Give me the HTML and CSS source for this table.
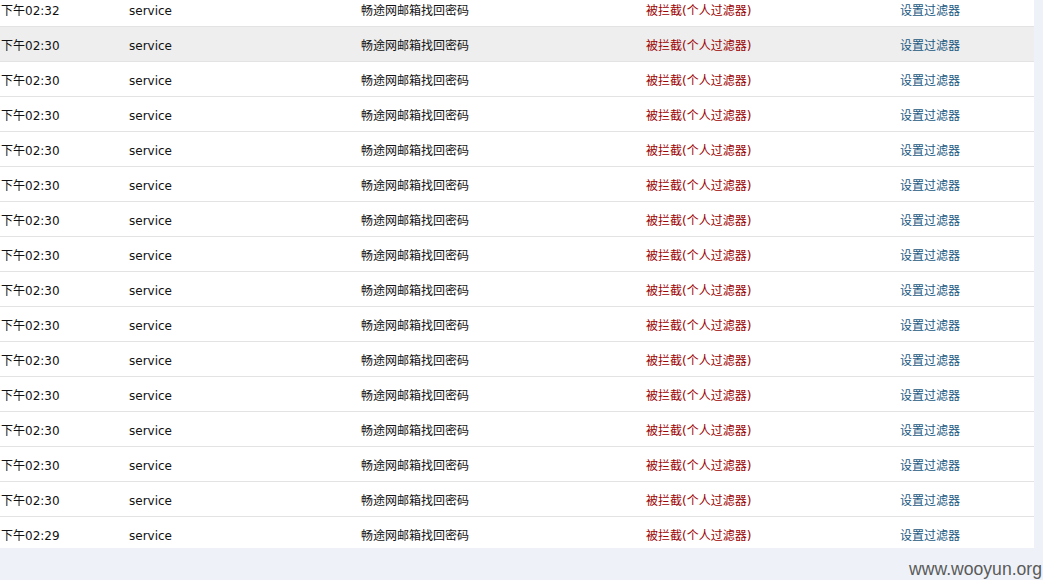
FILE: index.html
```html
<!DOCTYPE html>
<html lang="zh-CN">
<head>
<meta charset="utf-8">
<title>邮件列表</title>
<link rel="stylesheet" href="styles.css">
</head>
<body>
<div class="page">
  <div class="list">
    <div class="row"><span class="c time">下午02:32</span><span class="c from">service</span><span class="c subj">畅途网邮箱找回密码</span><span class="c status">被拦截(个人过滤器)</span><a class="c act" href="#">设置过滤器</a></div>
    <div class="row alt"><span class="c time">下午02:30</span><span class="c from">service</span><span class="c subj">畅途网邮箱找回密码</span><span class="c status">被拦截(个人过滤器)</span><a class="c act" href="#">设置过滤器</a></div>
    <div class="row"><span class="c time">下午02:30</span><span class="c from">service</span><span class="c subj">畅途网邮箱找回密码</span><span class="c status">被拦截(个人过滤器)</span><a class="c act" href="#">设置过滤器</a></div>
    <div class="row"><span class="c time">下午02:30</span><span class="c from">service</span><span class="c subj">畅途网邮箱找回密码</span><span class="c status">被拦截(个人过滤器)</span><a class="c act" href="#">设置过滤器</a></div>
    <div class="row"><span class="c time">下午02:30</span><span class="c from">service</span><span class="c subj">畅途网邮箱找回密码</span><span class="c status">被拦截(个人过滤器)</span><a class="c act" href="#">设置过滤器</a></div>
    <div class="row"><span class="c time">下午02:30</span><span class="c from">service</span><span class="c subj">畅途网邮箱找回密码</span><span class="c status">被拦截(个人过滤器)</span><a class="c act" href="#">设置过滤器</a></div>
    <div class="row"><span class="c time">下午02:30</span><span class="c from">service</span><span class="c subj">畅途网邮箱找回密码</span><span class="c status">被拦截(个人过滤器)</span><a class="c act" href="#">设置过滤器</a></div>
    <div class="row"><span class="c time">下午02:30</span><span class="c from">service</span><span class="c subj">畅途网邮箱找回密码</span><span class="c status">被拦截(个人过滤器)</span><a class="c act" href="#">设置过滤器</a></div>
    <div class="row"><span class="c time">下午02:30</span><span class="c from">service</span><span class="c subj">畅途网邮箱找回密码</span><span class="c status">被拦截(个人过滤器)</span><a class="c act" href="#">设置过滤器</a></div>
    <div class="row"><span class="c time">下午02:30</span><span class="c from">service</span><span class="c subj">畅途网邮箱找回密码</span><span class="c status">被拦截(个人过滤器)</span><a class="c act" href="#">设置过滤器</a></div>
    <div class="row"><span class="c time">下午02:30</span><span class="c from">service</span><span class="c subj">畅途网邮箱找回密码</span><span class="c status">被拦截(个人过滤器)</span><a class="c act" href="#">设置过滤器</a></div>
    <div class="row"><span class="c time">下午02:30</span><span class="c from">service</span><span class="c subj">畅途网邮箱找回密码</span><span class="c status">被拦截(个人过滤器)</span><a class="c act" href="#">设置过滤器</a></div>
    <div class="row"><span class="c time">下午02:30</span><span class="c from">service</span><span class="c subj">畅途网邮箱找回密码</span><span class="c status">被拦截(个人过滤器)</span><a class="c act" href="#">设置过滤器</a></div>
    <div class="row"><span class="c time">下午02:30</span><span class="c from">service</span><span class="c subj">畅途网邮箱找回密码</span><span class="c status">被拦截(个人过滤器)</span><a class="c act" href="#">设置过滤器</a></div>
    <div class="row"><span class="c time">下午02:30</span><span class="c from">service</span><span class="c subj">畅途网邮箱找回密码</span><span class="c status">被拦截(个人过滤器)</span><a class="c act" href="#">设置过滤器</a></div>
    <div class="row last"><span class="c time">下午02:29</span><span class="c from">service</span><span class="c subj">畅途网邮箱找回密码</span><span class="c status">被拦截(个人过滤器)</span><a class="c act" href="#">设置过滤器</a></div>
  </div>
  <div class="mark">www.wooyun.org</div>
</div>
</body>
</html>
```
FILE: styles.css
```css
html, body {
  margin: 0;
  padding: 0;
  background: #eef2f8;
}
.page {
  width: 1043px;
  height: 580px;
  overflow: hidden;
  display: flex;
  flex-direction: column;
}
.list {
  width: 1034px;
  height: 556px;
  margin-top: -8px;
  overflow: hidden;
  background: #ffffff;
  flex: none;
}
.row {
  display: grid;
  grid-template-columns: 128px 232px 285px 254px 1fr;
  align-items: center;
  height: 34px;
  border-bottom: 1px solid #e3e3e3;
  font-family: "DejaVu Sans", Verdana, "Noto Sans CJK SC", sans-serif;
  font-size: 12px;
  color: #111111;
}
.row.alt {
  background: #eeeeee;
}
.row.last {
  border-bottom: none;
}
.c {
  display: block;
  height: 16px;
  line-height: 16px;
  padding-top: 4px;
  padding-left: 1px;
  white-space: nowrap;
}
.status {
  color: #9c0000;
}
.act {
  color: #1a5882;
  text-decoration: none;
}
.mark {
  margin-top: 11px;
  text-align: right;
  padding-right: 1px;
  font-family: "Liberation Sans", Arial, sans-serif;
  font-size: 17.6px;
  color: #5a5a5a;
  line-height: 21px;
}
```
